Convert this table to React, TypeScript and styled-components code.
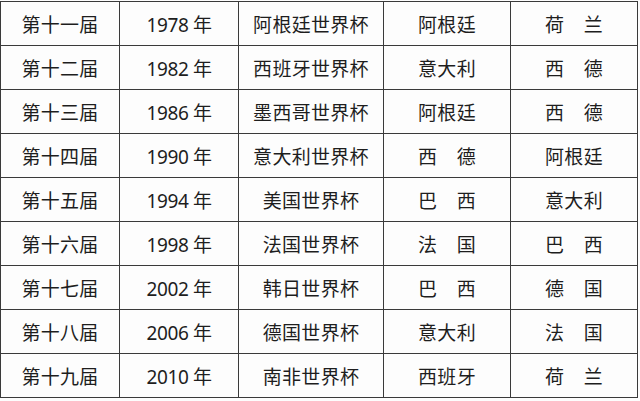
import styled, { createGlobalStyle } from "styled-components";

const GlobalStyle = createGlobalStyle`
  html, body {
    margin: 0;
    padding: 0;
    background: #fdfdfd;
  }
  body {
    font-family: "Noto Sans", "Noto Sans CJK SC", sans-serif;
    overflow: hidden;
  }
`;

type Cup = {
  edition: string;
  year: string;
  name: string;
  champion: string;
  runnerUp: string;
};

const cups: Cup[] = [
  { edition: "第十一届", year: "1978 年", name: "阿根廷世界杯", champion: "阿根廷", runnerUp: "荷　兰" },
  { edition: "第十二届", year: "1982 年", name: "西班牙世界杯", champion: "意大利", runnerUp: "西　德" },
  { edition: "第十三届", year: "1986 年", name: "墨西哥世界杯", champion: "阿根廷", runnerUp: "西　德" },
  { edition: "第十四届", year: "1990 年", name: "意大利世界杯", champion: "西　德", runnerUp: "阿根廷" },
  { edition: "第十五届", year: "1994 年", name: "美国世界杯", champion: "巴　西", runnerUp: "意大利" },
  { edition: "第十六届", year: "1998 年", name: "法国世界杯", champion: "法　国", runnerUp: "巴　西" },
  { edition: "第十七届", year: "2002 年", name: "韩日世界杯", champion: "巴　西", runnerUp: "德　国" },
  { edition: "第十八届", year: "2006 年", name: "德国世界杯", champion: "意大利", runnerUp: "法　国" },
  { edition: "第十九届", year: "2010 年", name: "南非世界杯", champion: "西班牙", runnerUp: "荷　兰" },
];

const widths = [119, 119, 145, 127, 127];

const Page = styled.div`
  padding-top: 1px;
`;

const Table = styled.table`
  border-collapse: collapse;
  table-layout: fixed;
  width: 637px;
`;

const Row = styled.tr`
  height: 44px;
`;

const Cell = styled.td<{ $year?: boolean }>`
  border: 1.5px solid #3a3a3a;
  padding: 4px 0 0;
  text-align: center;
  vertical-align: middle;
  font-size: 19px;
  line-height: 1;
  color: #1e1e1e;
  letter-spacing: ${(p) => (p.$year ? "-0.4px" : "0.3px")};
`;

export default function App() {
  return (
    <>
      <GlobalStyle />
      <Page>
        <Table>
          <colgroup>
            {widths.map((w, i) => (
              <col key={i} style={{ width: w }} />
            ))}
          </colgroup>
          <tbody>
            {cups.map((c) => (
              <Row key={c.edition}>
                <Cell>{c.edition}</Cell>
                <Cell $year>{c.year}</Cell>
                <Cell>{c.name}</Cell>
                <Cell>{c.champion}</Cell>
                <Cell>{c.runnerUp}</Cell>
              </Row>
            ))}
          </tbody>
        </Table>
      </Page>
    </>
  );
}
